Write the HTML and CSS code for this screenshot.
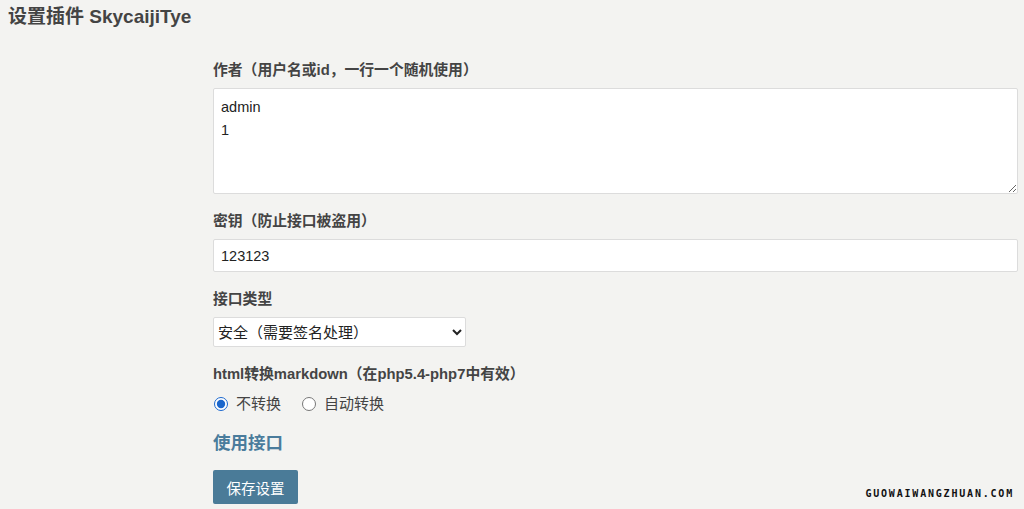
FILE: index.html
```html
<!DOCTYPE html>
<html lang="zh-CN">
<head>
    <meta charset="UTF-8">
    <title>设置插件 SkycaijiTye</title>
    <link rel="stylesheet" href="styles.css">
</head>
<body>
    <h1 class="page-title">设置插件 SkycaijiTye</h1>

    <form class="plugin-form" onsubmit="return false">
        <div class="group">
            <label for="author">作者（用户名或id，一行一个随机使用）</label>
            <textarea id="author" class="field area">admin
1</textarea>
        </div>

        <div class="group">
            <label for="secret">密钥（防止接口被盗用）</label>
            <input type="text" id="secret" class="field" value="123123">
        </div>

        <div class="group">
            <label for="api-type">接口类型</label>
            <select id="api-type" class="field select">
                <option>安全（需要签名处理）</option>
                <option>普通</option>
            </select>
        </div>

        <div class="group">
            <label class="radio-title">html转换markdown（在php5.4-php7中有效）</label>
            <div class="radios">
                <label class="radio"><input type="radio" name="md" checked> 不转换</label>
                <label class="radio"><input type="radio" name="md"> 自动转换</label>
            </div>
        </div>

        <h3 class="section-link">使用接口</h3>

        <button type="submit" class="btn-save">保存设置</button>
    </form>

    <div class="watermark">GUOWAIWANGZHUAN.COM</div>
</body>
</html>
```

FILE: styles.css
```css
body {
    margin: 0;
    background: #f3f3f1;
    font-family: "Liberation Sans", "Noto Sans CJK SC", sans-serif;
    color: #444;
    font-size: 14px;
    position: relative;
    height: 509px;
    overflow: hidden;
}
.page-title {
    margin: 0;
    padding: 5px 0 0 8px;
    font-size: 19px;
    line-height: 24px;
    font-weight: bold;
    color: #444;
}
.plugin-form {
    margin: 31px 0 0 213px;
    width: 805px;
}
.group {
    margin-bottom: 17px;
}
.group > label {
    display: block;
    font-weight: bold;
    font-size: 14.8px;
    line-height: 20px;
    margin-bottom: 8px;
    color: #444;
}
.group > .radio-title {
    margin-bottom: 10px;
}
.field {
    display: block;
    box-sizing: border-box;
    width: 100%;
    height: 33px;
    border: 1px solid #dcdcdc;
    background: #fff;
    padding: 0 7px;
    font-family: "Liberation Sans", "Noto Sans CJK SC", sans-serif;
    font-size: 14.5px;
    color: #222;
    border-radius: 2px;
    outline: none;
}
.area {
    height: 106px;
    padding: 7px 7px;
    line-height: 23px;
    resize: vertical;
}
.select {
    width: 253px;
    height: 30px;
    padding: 0;
    font-size: 15px;
}
.radios {
    display: flex;
    gap: 20px;
    line-height: 20px;
}
.radio {
    display: flex;
    align-items: center;
    color: #444;
    font-size: 15px;
}
.radio input {
    margin: 0 8px 0 1px;
    width: 14px;
    height: 14px;
    accent-color: #1a66cc;
}
.section-link {
    margin: 2px 0 15px;
    font-size: 17.5px;
    line-height: 24px;
    color: #4a7c9c;
}
.btn-save {
    width: 85px;
    height: 34px;
    border: none;
    border-radius: 2px;
    background: #4a7b98;
    color: #fff;
    font-family: "Liberation Sans", "Noto Sans CJK SC", sans-serif;
    font-size: 14.5px;
    cursor: pointer;
}
.watermark {
    position: absolute;
    right: 10px;
    bottom: 10px;
    font-family: "DejaVu Sans Mono", monospace;
    font-weight: bold;
    font-size: 10px;
    letter-spacing: 1.8px;
    color: #111;
}
```
